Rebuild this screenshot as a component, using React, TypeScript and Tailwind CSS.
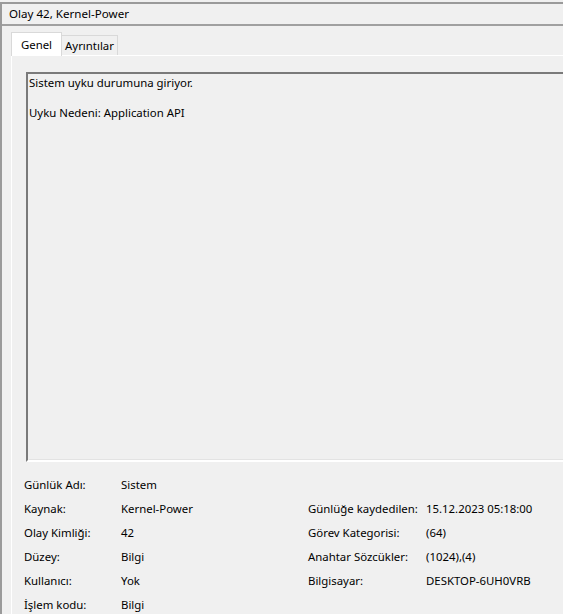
import React from 'react';

const rows: [string, string, string?, string?][] = [
  ['Günlük Adı:', 'Sistem'],
  ['Kaynak:', 'Kernel-Power', 'Günlüğe kaydedilen:', '15.12.2023 05:18:00'],
  ['Olay Kimliği:', '42', 'Görev Kategorisi:', '(64)'],
  ['Düzey:', 'Bilgi', 'Anahtar Sözcükler:', '(1024),(4)'],
  ['Kullanıcı:', 'Yok', 'Bilgisayar:', 'DESKTOP-6UH0VRB'],
  ['İşlem kodu:', 'Bilgi'],
];

export default function App() {
  return (
    <div className="h-[614px] w-[563px] overflow-hidden bg-[#f0f0f0] pt-[2px] font-['Noto_Sans',sans-serif] text-[11.4px] text-black">
      <div className="h-[640px] w-[620px] border-t-2 border-l-2 border-[#9a9a9a]">
        {/* başlık */}
        <div className="flex h-[22px] items-center border-b-2 border-[#a0a0a0] pl-[7px] text-[11.6px]">
          Olay 42, Kernel-Power
        </div>

        <div className="pt-[6px] pl-[9px]">
          {/* sekmeler */}
          <div className="flex items-end">
            <div className="relative z-10 -mb-px flex h-[24px] w-[51px] items-start justify-center border border-b-0 border-[#d9d9d9] bg-white pt-[3px]">
              Genel
            </div>
            <div className="flex h-[20px] w-[56px] items-start justify-center border border-b-0 border-l-0 border-[#d9d9d9] bg-[#f0f0f0] pt-[1px]">
              Ayrıntılar
            </div>
          </div>

          {/* panel */}
          <div className="border-t border-l border-white pt-[16px] pl-[14px]">
            <div className="h-[390px] border-t-2 border-l-2 border-t-[#7a7a7a] border-l-[#7a7a7a] border-b-2 border-b-white pl-[1px]">
              <div className="h-full border-b border-[#e3e3e3]">
                <p className="leading-[18px]">Sistem uyku durumuna giriyor.</p>
                <p className="mt-[12px] leading-[18px]">Uyku Nedeni: Application API</p>
              </div>
            </div>

            <div className="-ml-[14px] mt-[11px] grid grid-cols-[97px_187px_118px_1fr] pl-[12px]">
              {rows.map(([l, v, l2, v2], i) => (
                <React.Fragment key={i}>
                  <div className="h-[24px] leading-[24px]">{l}</div>
                  <div className="h-[24px] leading-[24px]">{v}</div>
                  <div className="h-[24px] leading-[24px]">{l2 ?? ''}</div>
                  <div className="h-[24px] leading-[24px]">{v2 ?? ''}</div>
                </React.Fragment>
              ))}
            </div>
          </div>
        </div>
      </div>
    </div>
  );
}
